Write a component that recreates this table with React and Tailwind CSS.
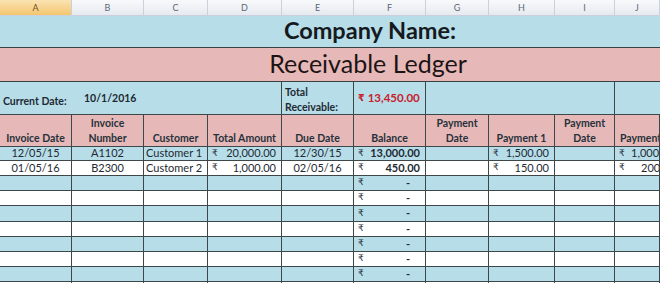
import React from "react";

const cols = ["A", "B", "C", "D", "E", "F", "G", "H", "I", "J"];

const dataRows = [
  { bg: "bg-[#b7dde8]", h: "h-[14px]", a: "12/05/15", b: "A1102", c: "Customer 1", d: "20,000.00", e: "12/30/15", f: "13,000.00", hh: "1,500.00", j: "1,000.00" },
  { bg: "bg-white", h: "h-[15px]", a: "01/05/16", b: "B2300", c: "Customer 2", d: "1,000.00", e: "02/05/16", f: "450.00", hh: "150.00", j: "200.00" },
  { bg: "bg-[#b7dde8]", h: "h-[15px]" },
  { bg: "bg-white", h: "h-[15px]" },
  { bg: "bg-[#b7dde8]", h: "h-[16px]" },
  { bg: "bg-white", h: "h-[15px]" },
  { bg: "bg-[#b7dde8]", h: "h-[15px]" },
  { bg: "bg-white", h: "h-[15px]" },
  { bg: "bg-[#b7dde8]", h: "h-[15px]" },
  { bg: "bg-white", h: "h-[15px]" },
];

function Money({ value, bold, dash }) {
  return (
    <div className={`flex items-center justify-between w-full pl-[4px] pr-[5px] ${bold ? "font-bold" : ""}`}>
      <span className="font-['DejaVu_Sans',sans-serif] text-[9px] font-normal">₹</span>
      {dash ? <span className="pr-[10px] font-bold">-</span> : <span>{value}</span>}
    </div>
  );
}

export default function App() {
  const cell = "border-r border-b border-[#3d4649] flex items-center overflow-hidden whitespace-nowrap";
  return (
    <div className="w-[660px] h-[283px] overflow-hidden bg-white font-['Lato',sans-serif] text-[#1e2a33]">
      <div className="grid grid-cols-[72px_72px_64px_74px_72px_72px_63px_66px_60px_45px]">
        {cols.map((c, i) => (
          <div
            key={c}
            className={`h-[16px] flex items-center justify-center text-[9px] border-r border-b border-[#c9d1dc] ${
              i === 0
                ? "bg-gradient-to-b from-[#fbe3b2] to-[#f3c66e] text-[#6b5424]"
                : "bg-gradient-to-b from-[#f8f9fb] to-[#e6eaf0] text-[#5c6878]"
            }`}
          >
            {c}
          </div>
        ))}

        <div className="col-span-10 h-[32px] bg-[#b7dde8] border-b border-[#3a3f42] flex items-center justify-center pl-[80px] pb-[2px] text-[23.5px] font-bold text-[#141a1e]">
          Company Name:
        </div>
        <div className="col-span-10 h-[34px] bg-[#e6b8b7] border-b border-[#3a3f42] flex items-center justify-center pl-[76px] pb-[2px] text-[25px] text-[#1c1414]">
          Receivable Ledger
        </div>

        <div className="col-span-4 h-[33px] bg-[#b7dde8] border-r border-b border-[#3d4649] flex items-center text-[10.5px] font-bold">
          <span className="pl-[3px] pt-[8px] w-[84px]">Current Date:</span>
          <span className="pt-[2px]">10/1/2016</span>
        </div>
        <div className="h-[33px] bg-[#b7dde8] border-r border-b border-[#3d4649] flex flex-col justify-center pl-[3px] pt-[3px] text-[10.5px] font-bold leading-[15px]">
          <span>Total</span>
          <span>Receivable:</span>
        </div>
        <div className="h-[33px] bg-[#b7dde8] border-r border-b border-[#3d4649] flex items-center pl-[4px] text-[11.5px] font-bold text-[#c8202c]">
          <span className="font-['DejaVu_Sans',sans-serif] text-[9.5px] mr-[3px]">₹</span>13,450.00
        </div>
        <div className="col-span-3 h-[33px] bg-[#b7dde8] border-r border-b border-[#3d4649]"></div>
        <div className="h-[33px] bg-[#b7dde8] border-b border-[#3d4649]"></div>

        {[
          ["Invoice Date", "justify-center"],
          [["Invoice", "Number"], "justify-center"],
          ["Customer", "justify-center"],
          ["Total Amount", "justify-center"],
          ["Due Date", "justify-center"],
          ["Balance", "justify-center"],
          [["Payment", "Date"], "justify-center"],
          ["Payment 1", "justify-center"],
          [["Payment", "Date"], "justify-center"],
          ["Payment 2", "justify-start pl-[5px]"],
        ].map(([t, j], i) => (
          <div
            key={i}
            className="h-[32px] bg-[#e6b8b7] border-r border-b border-[#3d4649] flex flex-col items-stretch justify-end text-[10.5px] font-bold leading-[15px] overflow-hidden whitespace-nowrap text-[#26323b]"
          >
            {Array.isArray(t) ? (
              t.map((x) => (
                <div key={x} className={`flex ${j}`}>{x}</div>
              ))
            ) : (
              <div className={`flex ${j}`}>{t}</div>
            )}
          </div>
        ))}

        {dataRows.map((r, i) => (
          <React.Fragment key={i}>
            <div className={`${cell} ${r.bg} ${r.h} justify-center text-[11px]`}>{r.a}</div>
            <div className={`${cell} ${r.bg} ${r.h} justify-center text-[11px]`}>{r.b}</div>
            <div className={`${cell} ${r.bg} ${r.h} pl-[2px] text-[11px]`}>{r.c}</div>
            <div className={`${cell} ${r.bg} ${r.h} text-[11px]`}>{r.d && <Money value={r.d} />}</div>
            <div className={`${cell} ${r.bg} ${r.h} justify-center text-[11px]`}>{r.e}</div>
            <div className={`${cell} ${r.bg} ${r.h} text-[11px]`}>
              <Money value={r.f} bold dash={!r.f} />
            </div>
            <div className={`${cell} ${r.bg} ${r.h}`}></div>
            <div className={`${cell} ${r.bg} ${r.h} text-[11px]`}>{r.hh && <Money value={r.hh} />}</div>
            <div className={`${cell} ${r.bg} ${r.h}`}></div>
            <div className={`${cell} ${r.bg} ${r.h} text-[11px]`}>
              {r.j && (
                <div className="flex items-center pl-[4px] w-[70px] shrink-0">
                  <span className="font-['DejaVu_Sans',sans-serif] text-[9px] w-[10px]">₹</span>
                  <span className={r.j === "200.00" ? "pl-[12px]" : "pl-[2px]"}>{r.j}</span>
                </div>
              )}
            </div>
          </React.Fragment>
        ))}
      </div>
    </div>
  );
}
